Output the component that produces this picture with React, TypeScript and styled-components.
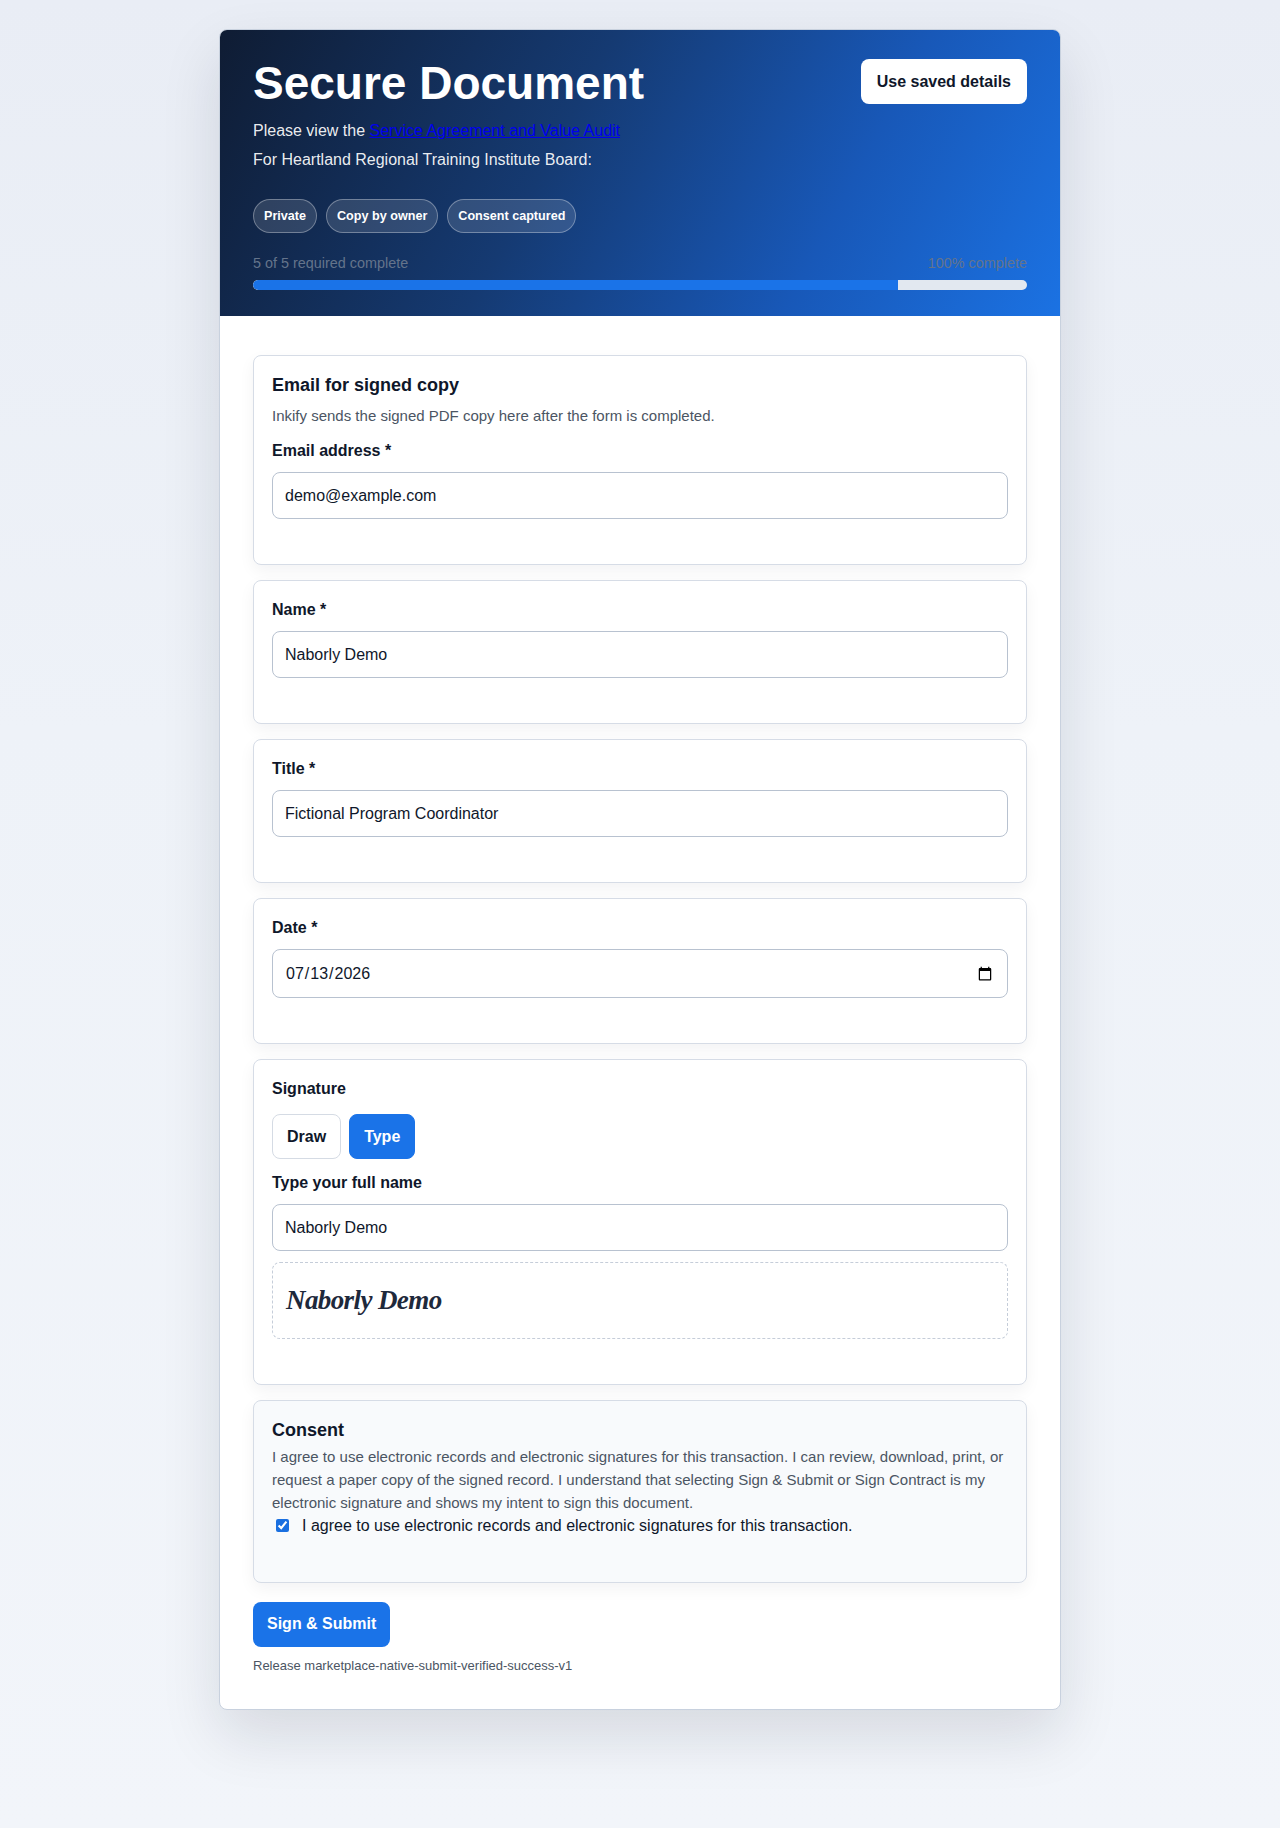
import React from "react";
import styled, { createGlobalStyle } from "styled-components";

const GlobalStyle = createGlobalStyle`
  html, body { margin: 0; padding: 0; }
  body {
    font-family: "Liberation Sans", Arial, Helvetica, sans-serif;
    background: linear-gradient(180deg, #e9edf5 0%, #eef2f8 40%, #f2f5fa 100%);
    min-height: 1828px;
    color: #0f172a;
  }
  * { box-sizing: border-box; }
`;

const Page = styled.div`
  display: flex;
  justify-content: center;
  padding: 29px 0 110px;
`;

const Card = styled.main`
  width: 842px;
  background: #ffffff;
  border: 1px solid #c8d1de;
  border-radius: 8px;
  overflow: hidden;
  box-shadow: 0 26px 60px rgba(15, 23, 42, 0.12);
`;

const Header = styled.header`
  padding: 28px 33px 26px;
  color: #ffffff;
  background: linear-gradient(118deg, #0f1c33 0%, #153a72 40%, #1858b8 72%, #1b72e3 100%);
`;

const HeaderTop = styled.div`
  display: flex;
  justify-content: space-between;
  align-items: flex-start;
`;

const Title = styled.h1`
  margin: 2px 0 0;
  font-size: 46px;
  line-height: 46px;
  font-weight: 700;
  color: #ffffff;
`;

const Lead = styled.p<{ $gap: number }>`
  margin: ${(p) => p.$gap}px 0 0;
  font-size: 16px;
  line-height: 24px;
  color: rgba(255, 255, 255, 0.93);

  a {
    color: #0000ee;
    text-decoration: underline;
  }
`;

const SavedButton = styled.button`
  margin-top: 1px;
  height: 45px;
  padding: 0 16px;
  border: none;
  border-radius: 8px;
  background: #ffffff;
  color: #0f172a;
  font-family: inherit;
  font-size: 16px;
  font-weight: 700;
  cursor: pointer;
`;

const Chips = styled.div`
  display: flex;
  gap: 9px;
  margin-top: 27px;
`;

const Chip = styled.span`
  display: inline-block;
  padding: 8px 10px;
  font-size: 12.6px;
  line-height: 16px;
  font-weight: 700;
  color: #ffffff;
  background: rgba(255, 255, 255, 0.13);
  border: 1px solid rgba(255, 255, 255, 0.32);
  border-radius: 999px;
`;

const ProgressMeta = styled.div`
  display: flex;
  justify-content: space-between;
  margin-top: 20px;
  font-size: 14.4px;
  line-height: 20px;
  color: #64748b;
`;

const Track = styled.div`
  margin-top: 7px;
  height: 10px;
  border-radius: 999px;
  background: #e2e8f0;
  overflow: hidden;
`;

const Fill = styled.div`
  height: 100%;
  background: #1a73e8;
  border-radius: 999px 0 0 999px;
`;

const Body = styled.div`
  padding: 39px 33px 34px;
`;

const Stack = styled.div`
  display: flex;
  flex-direction: column;
  gap: 15px;
`;

const Section = styled.section<{ $muted?: boolean }>`
  padding: 18px 18px 45px;
  border: 1px solid #d6dce6;
  border-radius: 8px;
  background: ${(p) => (p.$muted ? "#f8fafc" : "#ffffff")};
  box-shadow: 0 6px 16px rgba(15, 23, 42, 0.05);
`;

const SectionTitle = styled.h2`
  margin: 0;
  font-size: 18px;
  line-height: 23.4px;
  font-weight: 700;
  color: #0f172a;
`;

const Desc = styled.p`
  margin: 8px 0 0;
  font-size: 15px;
  line-height: 22px;
  color: #4b5563;
`;

const Label = styled.label<{ $gap?: number }>`
  display: block;
  margin-top: ${(p) => p.$gap ?? 0}px;
  font-size: 16px;
  line-height: 22px;
  font-weight: 700;
  color: #0f172a;
`;

const Input = styled.input<{ $h?: number }>`
  display: block;
  width: 100%;
  height: ${(p) => p.$h ?? 47}px;
  margin-top: 10px;
  padding: 0 12px;
  border: 1px solid #b8c2d0;
  border-radius: 8px;
  background: #ffffff;
  font-family: inherit;
  font-size: 16px;
  color: #0f172a;
  outline: none;
`;

const ToggleRow = styled.div`
  display: flex;
  gap: 8px;
  margin-top: 14px;
`;

const Toggle = styled.button<{ $active?: boolean }>`
  height: 45px;
  padding: 0 14px;
  border-radius: 8px;
  border: 1px solid ${(p) => (p.$active ? "#1a73e8" : "#d5dbe4")};
  background: ${(p) => (p.$active ? "#1a73e8" : "#ffffff")};
  color: ${(p) => (p.$active ? "#ffffff" : "#0f172a")};
  font-family: inherit;
  font-size: 16px;
  font-weight: 700;
  cursor: pointer;
`;

const Preview = styled.div`
  display: flex;
  align-items: center;
  height: 77px;
  margin-top: 11px;
  padding: 0 13px;
  border: 1px dashed #c5cdd9;
  border-radius: 8px;
`;

const ScriptName = styled.span`
  font-family: "Liberation Serif", "Times New Roman", serif;
  font-style: italic;
  font-weight: 700;
  font-size: 27px;
  letter-spacing: -0.6px;
  color: #1e293b;
`;

const ConsentText = styled.p`
  margin: 2px 0 0;
  font-size: 15px;
  line-height: 23px;
  color: #4b5563;
`;

const CheckRow = styled.label`
  display: flex;
  align-items: center;
  gap: 10px;
  font-size: 16px;
  line-height: 23px;
  color: #0f172a;

  input {
    margin: 3px 3px 3px 4px;
    width: 13px;
    height: 13px;
    accent-color: #1a6fe0;
  }
`;

const Actions = styled.div`
  margin-top: 19px;
`;

const SubmitButton = styled.button`
  height: 45px;
  padding: 0 14px;
  border: none;
  border-radius: 8px;
  background: #1a73e8;
  color: #ffffff;
  font-family: inherit;
  font-size: 16px;
  font-weight: 700;
  cursor: pointer;
`;

const Release = styled.p`
  margin: 10px 0 0;
  font-size: 13px;
  line-height: 18px;
  color: #4b5563;
`;

export default function App() {
  const progress = 83.33;
  return (
    <>
      <GlobalStyle />
      <Page>
        <Card>
          <Header>
            <HeaderTop>
              <div>
                <Title>Secure Document</Title>
                <Lead $gap={13}>
                  Please view the <a href="#doc">Service Agreement and Value Audit</a>
                </Lead>
                <Lead $gap={5}>For Heartland Regional Training Institute Board:</Lead>
              </div>
              <SavedButton type="button">Use saved details</SavedButton>
            </HeaderTop>
            <Chips>
              <Chip>Private</Chip>
              <Chip>Copy by owner</Chip>
              <Chip>Consent captured</Chip>
            </Chips>
            <ProgressMeta>
              <span>5 of 5 required complete</span>
              <span>100% complete</span>
            </ProgressMeta>
            <Track>
              <Fill style={{ width: `${progress}%` }} />
            </Track>
          </Header>
          <Body>
            <Stack>
              <Section>
                <SectionTitle>Email for signed copy</SectionTitle>
                <Desc>Inkify sends the signed PDF copy here after the form is completed.</Desc>
                <Label $gap={13} htmlFor="email">Email address *</Label>
                <Input id="email" type="email" defaultValue="demo@example.com" />
              </Section>
              <Section>
                <Label htmlFor="name">Name *</Label>
                <Input id="name" type="text" defaultValue="Naborly Demo" />
              </Section>
              <Section>
                <Label htmlFor="title">Title *</Label>
                <Input id="title" type="text" defaultValue="Fictional Program Coordinator" />
              </Section>
              <Section>
                <Label htmlFor="date">Date *</Label>
                <Input id="date" type="date" $h={49} defaultValue="2026-07-13" />
              </Section>
              <Section>
                <Label>Signature</Label>
                <ToggleRow>
                  <Toggle type="button">Draw</Toggle>
                  <Toggle type="button" $active>Type</Toggle>
                </ToggleRow>
                <Label $gap={13} htmlFor="typed">Type your full name</Label>
                <Input id="typed" type="text" defaultValue="Naborly Demo" />
                <Preview>
                  <ScriptName>Naborly Demo</ScriptName>
                </Preview>
              </Section>
              <Section $muted>
                <SectionTitle>Consent</SectionTitle>
                <ConsentText>
                  I agree to use electronic records and electronic signatures for this transaction. I can review,
                  download, print, or request a paper copy of the signed record. I understand that selecting Sign &amp;
                  Submit or Sign Contract is my electronic signature and shows my intent to sign this document.
                </ConsentText>
                <CheckRow>
                  <input type="checkbox" defaultChecked />
                  <span>I agree to use electronic records and electronic signatures for this transaction.</span>
                </CheckRow>
              </Section>
            </Stack>
            <Actions>
              <SubmitButton type="button">Sign &amp; Submit</SubmitButton>
              <Release>Release marketplace-native-submit-verified-success-v1</Release>
            </Actions>
          </Body>
        </Card>
      </Page>
    </>
  );
}
